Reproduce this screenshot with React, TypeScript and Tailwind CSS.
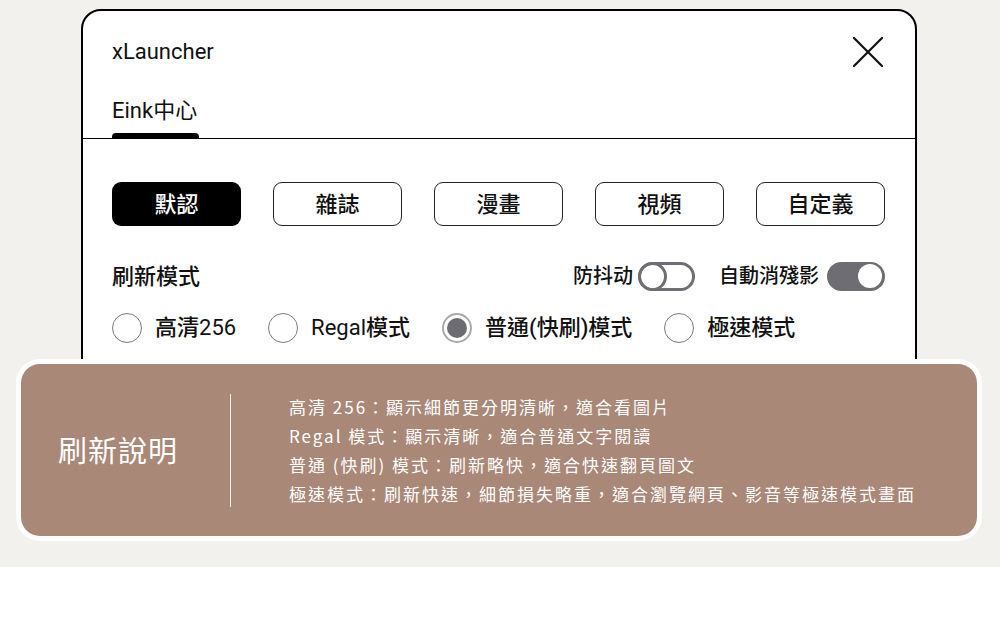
import React from "react";

const presets = ["默認", "雜誌", "漫畫", "視頻", "自定義"];
const modes = [
  { cjk: "高清", latin: "256", first: false, checked: false },
  { cjk: "模式", latin: "Regal", first: true, checked: false },
  { cjk: "普通(快刷)模式", latin: "", first: false, checked: true },
  { cjk: "極速模式", latin: "", first: false, checked: false },
];
const notes = [
  "高清 256：顯示細節更分明清晰，適合看圖片",
  "Regal 模式：顯示清晰，適合普通文字閱讀",
  "普通 (快刷) 模式：刷新略快，適合快速翻頁圖文",
  "極速模式：刷新快速，細節損失略重，適合瀏覽網頁、影音等極速模式畫面",
];

const Toggle = ({ on }: { on: boolean }) =>
  on ? (
    <div className="w-[58px] h-[29px] rounded-full bg-[#6e6d73] flex items-center justify-end pr-[3px]">
      <div className="w-[24px] h-[24px] rounded-full bg-white" />
    </div>
  ) : (
    <div className="w-[57px] h-[29px] rounded-full border-[3px] border-[#6f6e74] bg-white relative">
      <div className="absolute -left-[3px] -top-[3px] w-[29px] h-[29px] rounded-full border-[3px] border-[#6f6e74]" />
    </div>
  );

const Radio = ({ checked }: { checked: boolean }) =>
  checked ? (
    <div className="w-[30px] h-[30px] rounded-full border-2 border-[#a9a9ab] flex items-center justify-center">
      <div className="w-[20px] h-[20px] rounded-full bg-[#6d6c72]" />
    </div>
  ) : (
    <div className="w-[30px] h-[30px] rounded-full border border-[#7a7a7a]" />
  );

const App = () => {
  return (
    <div className="w-[1000px] h-[621px] bg-white">
      <div
        className="relative h-[567px] bg-[#f2f1ed] overflow-hidden pt-[9px]"
        style={{ fontFamily: "Roboto, 'Noto Sans CJK TC', sans-serif" }}
      >
        <div className="ml-[81px] w-[836px] h-[440px] bg-white border-2 border-black rounded-t-[20px] text-[#111]">
          <div className="h-[82px] flex items-center justify-between pl-[29px] pr-[32px]">
            <span className="text-[22px] leading-[26px]">xLauncher</span>
            <svg width="30" height="30" viewBox="0 0 30 30" fill="none" stroke="#111" strokeWidth="2.2" strokeLinecap="round">
              <path d="M1 1 L29 29 M29 1 L1 29" />
            </svg>
          </div>
          <div className="h-[46px] border-b-[1.5px] border-black pl-[29px]">
            <div className="inline-flex flex-col">
              <span className="text-[22px] leading-[26px] pt-[5px]">Eink中心</span>
              <div className="mt-[9px] h-[6px] w-[87px] bg-black rounded-t-[4px]" />
            </div>
          </div>

          <div className="pl-[29px] pr-[30px] pt-[43px]">
            <div className="flex justify-between">
              {presets.map((p, i) => (
                <div
                  key={p}
                  className={
                    i === 0
                      ? "w-[129px] h-[44px] rounded-[9px] bg-black text-white flex items-center justify-center text-[22px] font-medium"
                      : "w-[129px] h-[44px] rounded-[9px] border-[1.5px] border-[#222] flex items-center justify-center text-[22px] font-medium"
                  }
                >
                  {p}
                </div>
              ))}
            </div>

            <div className="mt-[35px] h-[30px] flex items-center justify-between">
              <span className="text-[22px] font-medium">刷新模式</span>
              <div className="flex items-center">
                <span className="text-[20px] font-medium mr-[5px]">防抖动</span>
                <Toggle on={false} />
                <span className="text-[20px] font-medium ml-[24px] mr-[8px]">自動消殘影</span>
                <Toggle on={true} />
              </div>
            </div>

            <div className="mt-[21px] h-[31px] flex items-center gap-[32px]">
              {modes.map((m) => (
                <div key={m.cjk} className="flex items-center gap-[13px]">
                  <Radio checked={m.checked} />
                  <span className="text-[22px] font-medium">
                    {m.first && <span className="font-normal">{m.latin}</span>}
                    {m.cjk}
                    {!m.first && m.latin && <span className="font-normal">{m.latin}</span>}
                  </span>
                </div>
              ))}
            </div>
          </div>
        </div>

        <div className="absolute left-[16px] top-[359px] w-[966px] h-[182px] rounded-[24px] bg-white p-[5px]">
          <div
            className="h-full rounded-[19px] bg-[#a98877] flex items-center text-white"
            style={{ fontFamily: "'Noto Sans CJK TC', sans-serif" }}
          >
            <div className="w-[209px] pl-[37px] text-[29px] tracking-[1px]">刷新說明</div>
            <div className="w-px h-[113px] bg-white/90" />
            <div className="pl-[58px] text-[17px] leading-[29px] tracking-[2px]">
              {notes.map((n) => (
                <div key={n}>{n}</div>
              ))}
            </div>
          </div>
        </div>
      </div>
    </div>
  );
};

export default App;
